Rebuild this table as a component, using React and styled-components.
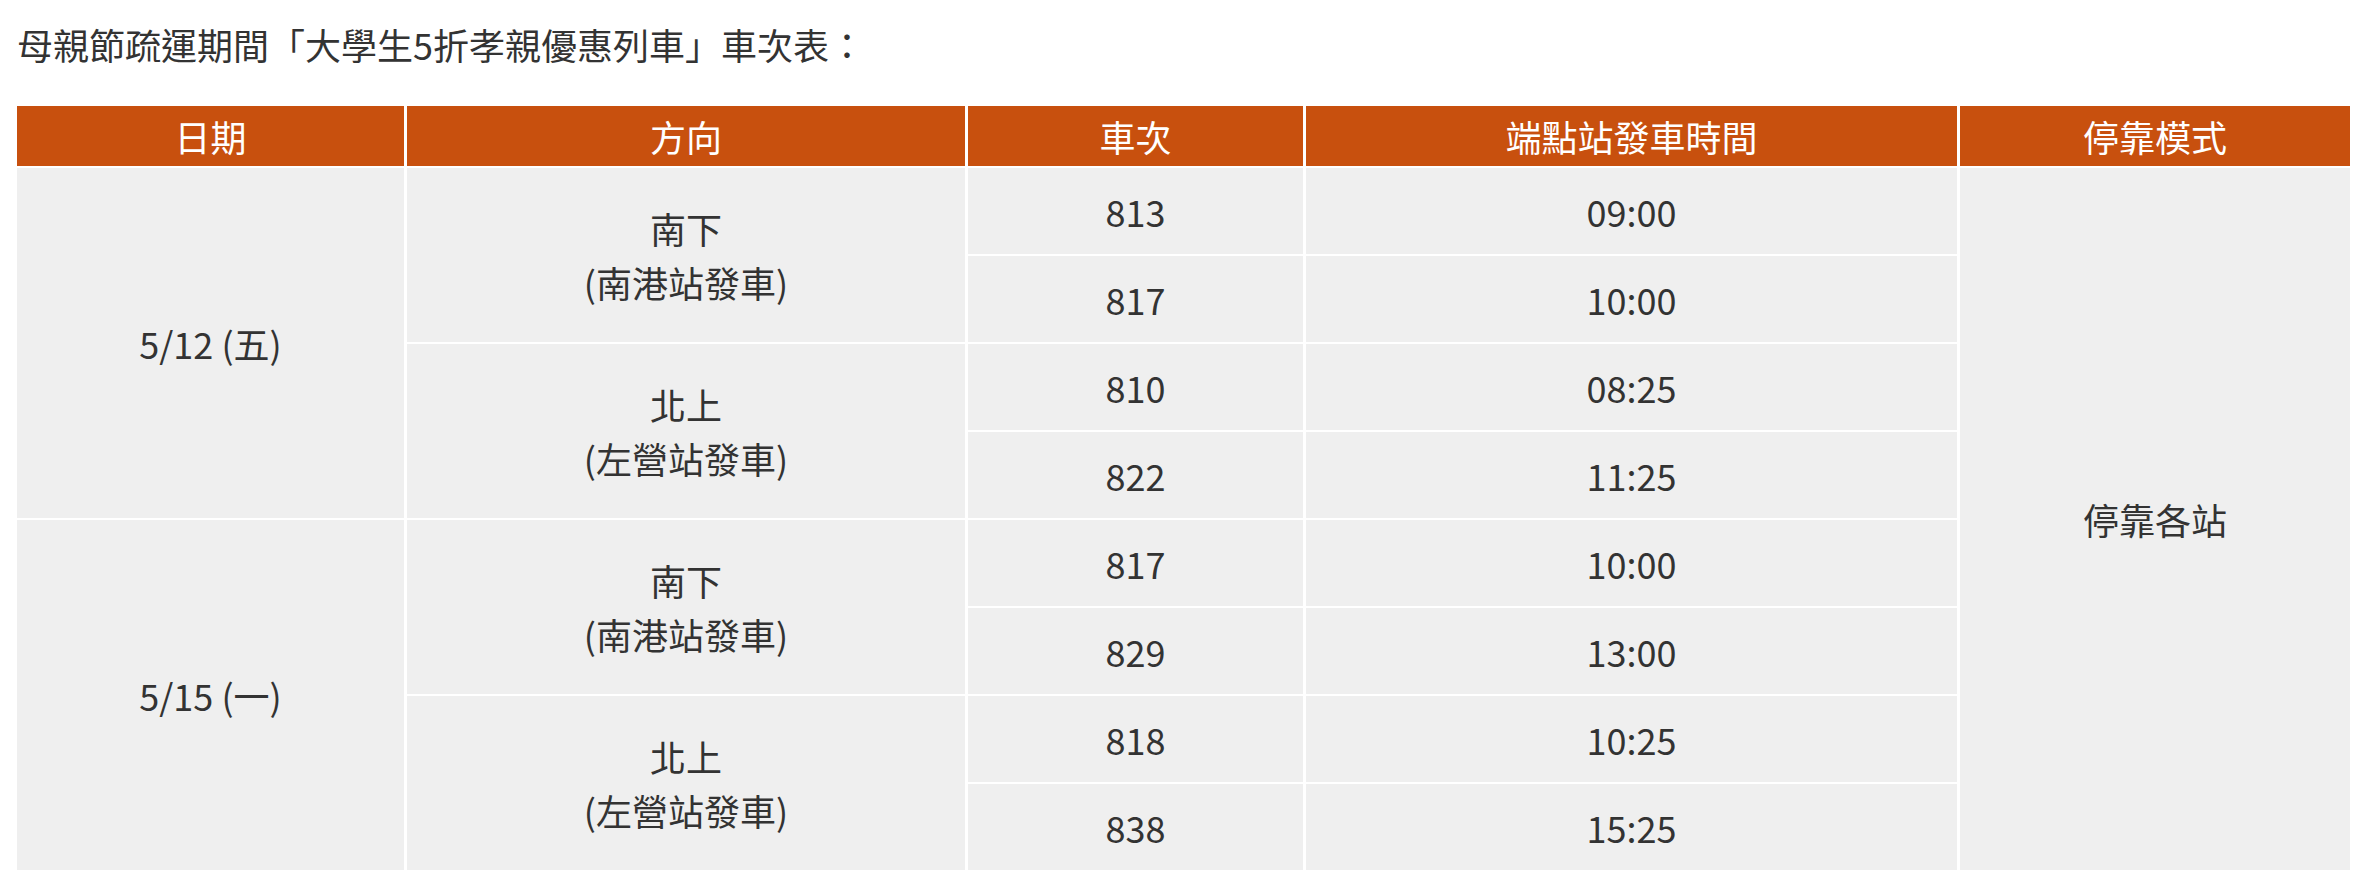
import React from 'react'
import styled, { createGlobalStyle } from 'styled-components'

const GlobalStyle = createGlobalStyle`
  body {
    margin: 0;
    background: #fff;
    font-family: "Noto Sans CJK TC", "Noto Sans", sans-serif;
    color: #333;
  }
`

const Page = styled.div`
  padding: 17px 0 0 14px;
`

const Title = styled.p`
  margin: 0 0 33px 3px;
  font-size: 36px;
  line-height: 54px;
  color: #333;
`

const Table = styled.table`
  border-collapse: separate;
  border-spacing: 3px 2px;
  table-layout: fixed;
`

const HeadCell = styled.th`
  width: ${(p) => p.w}px;
  height: 60px;
  padding: 0;
  background: #c8500e;
  color: #fff;
  font-size: 36px;
  font-weight: 400;
  line-height: 54px;
  text-align: center;
  vertical-align: middle;
`

const Cell = styled.td`
  height: 86px;
  padding: 0;
  background: #efefef;
  color: #333;
  font-size: 36px;
  line-height: 54px;
  text-align: center;
  vertical-align: middle;
`

const columns = [
  { label: '日期', w: 387 },
  { label: '方向', w: 558 },
  { label: '車次', w: 335 },
  { label: '端點站發車時間', w: 651 },
  { label: '停靠模式', w: 390 },
]

const schedule = [
  {
    date: '5/12 (五)',
    groups: [
      { dir: '南下', from: '(南港站發車)', trains: [['813', '09:00'], ['817', '10:00']] },
      { dir: '北上', from: '(左營站發車)', trains: [['810', '08:25'], ['822', '11:25']] },
    ],
  },
  {
    date: '5/15 (一)',
    groups: [
      { dir: '南下', from: '(南港站發車)', trains: [['817', '10:00'], ['829', '13:00']] },
      { dir: '北上', from: '(左營站發車)', trains: [['818', '10:25'], ['838', '15:25']] },
    ],
  },
]

export default function App() {
  const rows = []
  schedule.forEach((day, di) => {
    day.groups.forEach((group, gi) => {
      group.trains.forEach(([no, time], ti) => {
        rows.push(
          <tr key={`${di}-${gi}-${ti}`}>
            {gi === 0 && ti === 0 && <Cell rowSpan={4}>{day.date}</Cell>}
            {ti === 0 && (
              <Cell rowSpan={2}>
                {group.dir}
                <br />
                {group.from}
              </Cell>
            )}
            <Cell>{no}</Cell>
            <Cell>{time}</Cell>
            {di === 0 && gi === 0 && ti === 0 && <Cell rowSpan={8}>停靠各站</Cell>}
          </tr>
        )
      })
    })
  })

  return (
    <Page>
      <GlobalStyle />
      <Title>母親節疏運期間「大學生5折孝親優惠列車」車次表：</Title>
      <Table>
        <thead>
          <tr>
            {columns.map((c) => (
              <HeadCell key={c.label} w={c.w}>{c.label}</HeadCell>
            ))}
          </tr>
        </thead>
        <tbody>{rows}</tbody>
      </Table>
    </Page>
  )
}
